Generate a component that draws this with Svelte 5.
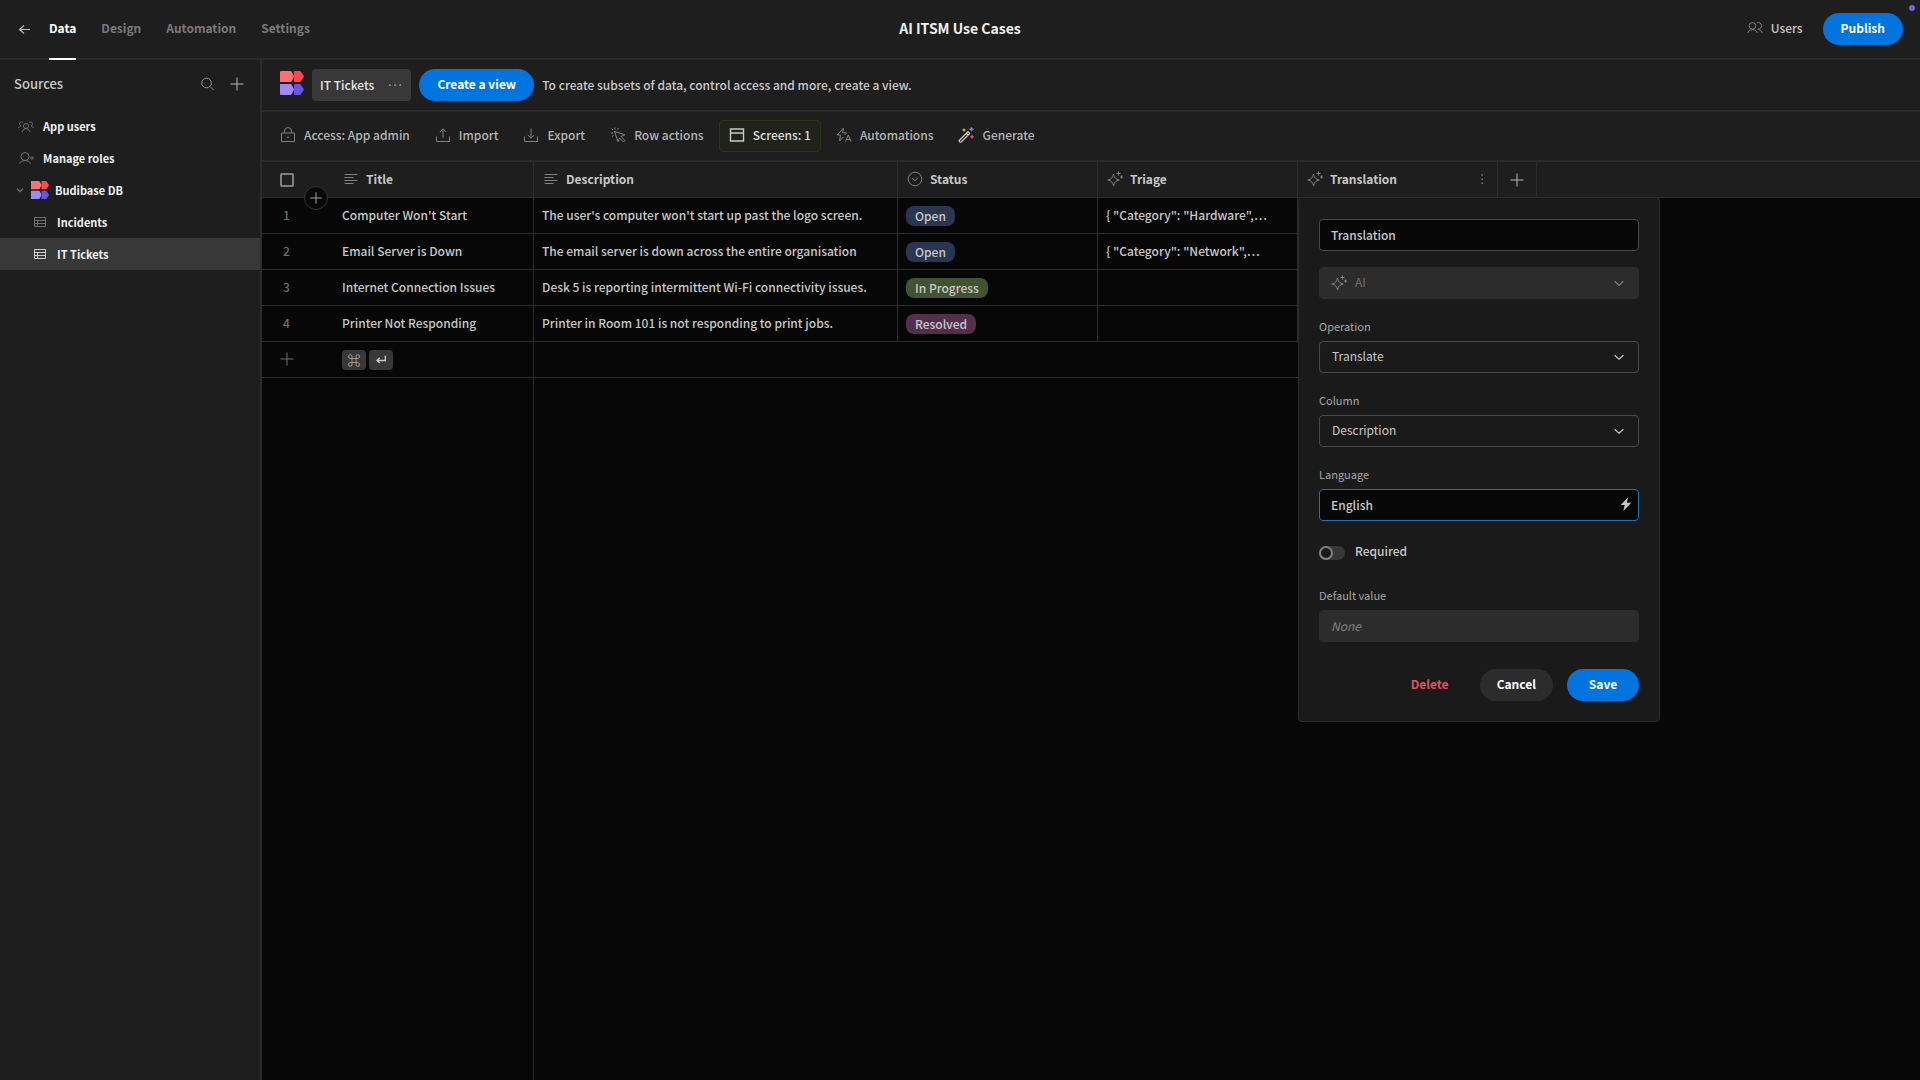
<script lang="ts">
	const tabs = ['Data', 'Design', 'Automation', 'Settings'];
	let activeTab = $state('Data');

	const sources = [
		{ name: 'App users', icon: 'group', level: 0 },
		{ name: 'Manage roles', icon: 'role', level: 0 },
		{ name: 'Budibase DB', icon: 'logo', level: 1 },
		{ name: 'Incidents', icon: 'table', level: 2 },
		{ name: 'IT Tickets', icon: 'table', level: 2 }
	];
	let activeSource = $state('IT Tickets');

	const actions = [
		{ name: 'Access: App admin', icon: 'lock' },
		{ name: 'Import', icon: 'import' },
		{ name: 'Export', icon: 'export' },
		{ name: 'Row actions', icon: 'click' },
		{ name: 'Screens: 1', icon: 'screen' },
		{ name: 'Automations', icon: 'automation' },
		{ name: 'Generate', icon: 'wand' }
	];

	const rows = [
		{
			title: "Computer Won't Start",
			description: "The user's computer won't start up past the logo screen.",
			status: 'Open',
			triage: '{ "Category": "Hardware",…'
		},
		{
			title: 'Email Server is Down',
			description: 'The email server is down across the entire organisation',
			status: 'Open',
			triage: '{ "Category": "Network",…'
		},
		{
			title: 'Internet Connection Issues',
			description: 'Desk 5 is reporting intermittent Wi-Fi connectivity issues.',
			status: 'In Progress',
			triage: ''
		},
		{
			title: 'Printer Not Responding',
			description: 'Printer in Room 101 is not responding to print jobs.',
			status: 'Resolved',
			triage: ''
		}
	];

	const statusClass: Record<string, string> = {
		Open: 'open',
		'In Progress': 'progress',
		Resolved: 'resolved'
	};

	let columnName = $state('Translation');
	let operation = $state('Translate');
	let column = $state('Description');
	let language = $state('English');
	let required = $state(false);
</script>

{#snippet logo(size: number)}
	<svg width={size} height={size} viewBox="0 0 24 24" aria-hidden="true">
		<path d="M0 .8Q0 0 .8 0H10.500q.8 0 1.200.7L14 5.500 11.700 10.300q-.4.7-1.200.7H0Z" fill="#ff6f73" />
		<path d="M14 .8Q14 0 14.800 0H19.500q.9 0 1.400.8L24 5.500 20.900 10.200q-.5.8-1.400.8H14.800q-.8 0-.8-.8Z" fill="#ff4750" />
		<path d="M0 13H10.500q.8 0 1.200.7L14 18.500 11.700 23.300q-.4.7-1.200.7H.8Q0 24 0 23.200Z" fill="#9f88f8" />
		<path d="M14 13.800Q14 13 14.800 13H19.500q.9 0 1.400.8L24 18.500 20.900 23.200q-.5.8-1.400.8H14.800q-.8 0-.8-.8Z" fill="#6a52e6" />
	</svg>
{/snippet}

{#snippet icon(name: string)}
	<svg class="icon" width="16" height="16" viewBox="0 0 16 16" aria-hidden="true">
		{#if name === 'back'}
			<path d="M14 8.500H3.500M8 4.500l-4.500 4 4.500 4" stroke-width="1.200" />
		{:else if name === 'search'}
			<circle cx="7.500" cy="7" r="4.800" /><path d="M11 10.500l3.500 3.500" />
		{:else if name === 'plus'}
			<path d="M8 1.500v13M1.500 8h13" />
		{:else if name === 'users'}
			<circle cx="5.500" cy="5.800" r="3.300" /><path d="M.5 13q1.500-3.500 5-3.500t5 3.500M10 2.800a3.300 3.300 0 1 1 .8 6.300q3 .4 4.700 3.900" />
		{:else if name === 'group'}
			<circle cx="8" cy="8" r="2.500" /><path d="M4 14q1-3.500 4-3.500t4 3.500M5 4.500a2 2 0 1 0-2 3.300Q1.500 8 .5 10M11 4.500a2 2 0 1 1 2 3.300q1.500.2 2.500 2.200" />
		{:else if name === 'role'}
			<circle cx="7" cy="6.500" r="4" /><path d="M1 13.500q2-3 6-3t6 3" /><circle cx="14" cy="8" r="1.200" />
		{:else if name === 'chevron'}
			<path d="M3 6l5 4.500L13 6" />
		{:else if name === 'table'}
			<path d="M2.500 3.500h11v9h-11zM2.500 6.500h11M2.500 9.500h11M5.500 6.500v6" />
		{:else if name === 'dots'}
			<path class="fill" d="M2 7.200h1.700v1.700H2zM7.200 7.200h1.700v1.700H7.200zM12.400 7.200h1.700v1.700h-1.700z" />
		{:else if name === 'more'}
			<path class="fill" d="M7.400 3.200h1.500v1.500H7.400zM7.400 7.400h1.500v1.500H7.400zM7.400 11.600h1.500v1.500H7.400z" />
		{:else if name === 'lock'}
			<path d="M1.500 6h13v8.500h-13zM4.500 6V4a3.500 3.500 0 0 1 7 0V6" /><circle class="fill" cx="8" cy="10.300" r=".9" />
		{:else if name === 'import'}
			<path d="M1.500 9.500v5h13v-5M8 11V2M4.800 5L8 1.800 11.200 5" />
		{:else if name === 'export'}
			<path d="M1.500 9.500v5h13v-5M8 1.500v9.500M4.800 8L8 11.200 11.200 8" />
		{:else if name === 'click'}
			<path d="M4.500 4.500l10.500 3.300-4 1.700 4 4-1.500 1.500-4-4-1.500 3.700ZM5 .5v2M1 6h2M1.500 1.500l1.700 1.700M8.500 1l-1 1.700M2 9.500l1.500-1" />
		{:else if name === 'screen'}
			<path d="M1.500 2h13v12h-13zM1.500 6h13" stroke-width="1.400" />
		{:else if name === 'automation'}
			<path d="M7.500 1L1.200 8h3.300L3.500 14l4-4M7.500 1L6.500 5.800h4L8.700 8M9.500 14.500l2.800-6.500 2.800 6.500M10.500 12.500h3.600" />
		{:else if name === 'wand'}
			<path d="M1.200 13.500L10 4.700l1.700 1.700L3 15.200Q1 15.500 1.200 13.500ZM8.500 6.300l1.700 1.700" stroke="#d0d0d0" stroke-width="1.200" />
			<path d="M13.500.300v4M11.500 2.300h4" stroke="#6e86e0" stroke-width="1.600" />
			<path d="M6 1.500v3M4.500 3h3" stroke="#d8b13c" stroke-width="1.400" />
			<path d="M14 8v3.500M12.300 9.800h3.400" stroke="#e0524f" stroke-width="1.500" />
		{:else if name === 'text'}
			<path d="M1.500 3.500h13M1.500 6.500h9M1.500 9.500h13M1.500 12.500h9" />
		{:else if name === 'options'}
			<circle cx="8" cy="8" r="6.800" /><path d="M4.800 6.700L8 9.700l3.200-3" />
		{:else if name === 'ai'}
			<path d="M6.500 3Q7.300 8.300 12.300 9 7.300 9.700 6.500 15 5.700 9.700.7 9 5.700 8.300 6.500 3ZM11.500.500v4M9.500 2.500h4M14.500 4.500v3M13 6h3" />
		{:else if name === 'bolt'}
			<path class="fill" d="M10.500 0L2 9h4.500L5 16l9-9.500H9Z" />
		{:else if name === 'return'}
			<path d="M13 3v5.500H4M6.500 5.500L3.500 8.500l3 3" stroke-width="1.600" />
		{/if}
	</svg>
{/snippet}

<div class="app">
	<header class="top-nav">
		<nav class="tabs">
			<button class="icon-btn" aria-label="Back">{@render icon('back')}</button>
			{#each tabs as tab}
				<button class="tab" class:active={tab === activeTab} onclick={() => (activeTab = tab)}>{tab}</button>
			{/each}
		</nav>
		<h1>AI ITSM Use Cases</h1>
		<div class="top-right">
			<button class="users">{@render icon('users')}Users</button>
			<button class="pill primary">Publish</button>
		</div>
		<span class="beacon"></span>
	</header>

	<div class="workspace">
		<aside class="sidebar">
			<div class="sidebar-header">
				<h2>Sources</h2>
				<button class="icon-btn" aria-label="Search">{@render icon('search')}</button>
				<button class="icon-btn light" aria-label="Add source">{@render icon('plus')}</button>
			</div>
			{#each sources as source}
				<button
					class="source level-{source.level}"
					class:selected={source.name === activeSource}
					onclick={() => (activeSource = source.name)}
				>
					{#if source.icon === 'logo'}
						<span class="caret">{@render icon('chevron')}</span>
						{@render logo(18)}
					{:else}
						{@render icon(source.icon)}
					{/if}
					<span>{source.name}</span>
				</button>
			{/each}
		</aside>

		<main class="content">
			<div class="view-bar">
				<span class="source-logo">{@render logo(24)}</span>
				<button class="view-tab">IT Tickets {@render icon('dots')}</button>
				<button class="pill primary">Create a view</button>
				<p>To create subsets of data, control access and more, create a view.</p>
			</div>

			<div class="toolbar">
				{#each actions as action}
					<button class="action" class:highlight={action.icon === 'screen'}>
						{@render icon(action.icon)}{action.name}
					</button>
				{/each}
			</div>

			<div class="grid">
				<table>
					<colgroup>
						<col class="col-gutter" />
						<col class="col-data" />
						<col class="col-description" />
						<col class="col-data" />
						<col class="col-data" />
						<col class="col-data" />
						<col class="col-add" />
						<col />
					</colgroup>
					<thead>
						<tr>
							<th class="gutter">
								<input type="checkbox" aria-label="Select all rows" />
								<button class="add-row" aria-label="Insert row">{@render icon('plus')}</button>
							</th>
							<th class="line"><div class="head">{@render icon('text')}Title</div></th>
							<th class="line"><div class="head">{@render icon('text')}Description</div></th>
							<th class="line"><div class="head">{@render icon('options')}Status</div></th>
							<th class="line"><div class="head">{@render icon('ai')}Triage</div></th>
							<th class="line">
								<div class="head">
									{@render icon('ai')}Translation
									<button class="icon-btn push" aria-label="Column options">{@render icon('more')}</button>
								</div>
								<form class="popover" onsubmit={(e) => e.preventDefault()}>
									<input class="field" type="text" aria-label="Column name" bind:value={columnName} />
									<div class="select disabled">
										<span class="leading">{@render icon('ai')}</span>
										<select class="field" aria-label="Column type" disabled>
											<option>AI</option>
										</select>
										<span class="trailing">{@render icon('chevron')}</span>
									</div>
									<div class="form-item">
										<label for="operation">Operation</label>
										<div class="select">
											<select class="field" id="operation" bind:value={operation}>
												<option>Translate</option>
											</select>
											<span class="trailing">{@render icon('chevron')}</span>
										</div>
									</div>
									<div class="form-item">
										<label for="column">Column</label>
										<div class="select">
											<select class="field" id="column" bind:value={column}>
												<option>Description</option>
												<option>Title</option>
											</select>
											<span class="trailing">{@render icon('chevron')}</span>
										</div>
									</div>
									<div class="form-item">
										<label for="language">Language</label>
										<div class="select">
											<input class="field focused" id="language" type="text" bind:value={language} />
											<span class="trailing bolt">{@render icon('bolt')}</span>
										</div>
									</div>
									<label class="toggle">
										<input type="checkbox" bind:checked={required} />
										<span>Required</span>
									</label>
									<div class="form-item">
										<label for="default-value">Default value</label>
										<input class="field" id="default-value" type="text" placeholder="None" disabled />
									</div>
									<div class="buttons">
										<button type="button" class="pill danger">Delete</button>
										<button type="button" class="pill secondary">Cancel</button>
										<button type="submit" class="pill primary">Save</button>
									</div>
								</form>
							</th>
							<th class="line center">
								<button class="icon-btn light" aria-label="Add column">{@render icon('plus')}</button>
							</th>
							<th></th>
						</tr>
					</thead>
					<tbody>
						{#each rows as row, i}
							<tr>
								<td class="gutter number">{i + 1}</td>
								<td class="line">{row.title}</td>
								<td class="line">{row.description}</td>
								<td class="line status"><span class="badge {statusClass[row.status]}">{row.status}</span></td>
								<td class="line">{row.triage}</td>
								<td class="line"></td>
								<td class="blank" colspan="2"></td>
							</tr>
						{/each}
						<tr>
							<td class="gutter">
								<button class="icon-btn dim" aria-label="Add row">{@render icon('plus')}</button>
							</td>
							<td class="line status">
								<div class="keys">
									<kbd>⌘</kbd>
									<kbd>{@render icon('return')}</kbd>
								</div>
							</td>
							<td colspan="4"></td>
							<td class="blank" colspan="2"></td>
						</tr>
						<tr class="rest">
							<td class="line blank" colspan="2"></td>
							<td class="blank" colspan="6"></td>
						</tr>
					</tbody>
				</table>
			</div>
		</main>
	</div>
</div>

<style>
	:global(body) {
		margin: 0;
		background: #070707;
	}

	.app {
		min-height: 100vh;
		display: flex;
		flex-direction: column;
		color: #c8c8c8;
		font-family: 'Noto Sans CJK SC', 'Source Sans Pro', sans-serif;
		font-size: 12px;
		line-height: 20px;
		font-weight: 500;
	}

	.app *,
	.app *::before {
		box-sizing: border-box;
	}

	button,
	input,
	select {
		font: inherit;
		color: inherit;
		margin: 0;
	}

	button {
		display: flex;
		align-items: center;
		padding: 0;
		border: none;
		background: none;
		white-space: nowrap;
		cursor: pointer;
	}

	h1,
	h2,
	p {
		margin: 0;
		font-size: inherit;
		font-weight: inherit;
	}

	svg {
		flex: none;
		display: block;
	}

	.icon {
		fill: none;
		stroke: currentColor;
		stroke-width: 1;
	}

	.icon .fill {
		fill: currentColor;
		stroke: none;
	}

	.icon-btn {
		color: #909090;
	}

	.icon-btn.light {
		color: #b8b8b8;
	}

	.icon-btn.dim {
		color: #707070;
	}

	.pill {
		justify-content: center;
		min-width: 72px;
		height: 32px;
		padding: 0 18px 2px;
		border-radius: 16px;
		font-weight: 700;
		color: #fff;
	}

	.pill.primary {
		background: #0074df;
	}

	.pill.secondary {
		background: #2c2c2c;
	}

	.pill.danger {
		color: #e0525e;
	}

	/* Top navigation */
	.top-nav {
		position: relative;
		display: grid;
		grid-template-columns: 1fr auto 1fr;
		align-items: center;
		height: 60px;
		padding-bottom: 2px;
		background: #1e1e1e;
		box-shadow: inset 0 -2px #2c2c2c;
	}

	.tabs {
		display: flex;
		align-items: center;
		gap: 25px;
		padding-left: 16px;
	}

	.tabs .icon-btn {
		margin-right: -8px;
		color: #b8b8b8;
	}

	.tab {
		height: 60px;
		margin-bottom: -2px;
		padding-bottom: 2px;
		border-bottom: 2px solid transparent;
		font-weight: 700;
		color: #7a7a7a;
	}

	.tab.active {
		border-bottom-color: #fff;
		color: #fff;
	}

	.top-nav h1 {
		padding-bottom: 2px;
		font-size: 14px;
		font-weight: 700;
		color: #f0f0f0;
	}

	.top-right {
		display: flex;
		justify-content: flex-end;
		align-items: center;
		gap: 20px;
		padding-right: 17px;
	}

	.users {
		gap: 8px;
		padding-bottom: 2px;
	}

	.users .icon {
		color: #808080;
	}

	.beacon {
		position: absolute;
		top: 5px;
		right: 5px;
		width: 6px;
		height: 6px;
		border-radius: 50%;
		background: #6b63dc;
	}

	/* Sources */
	.workspace {
		flex: 1;
		display: flex;
	}

	.sidebar {
		width: 262px;
		flex: none;
		border-right: 2px solid #2c2c2c;
		background: #1e1e1e;
	}

	.sidebar-header {
		display: flex;
		align-items: center;
		gap: 14px;
		height: 50px;
		padding: 0 15px 2px 14px;
	}

	.sidebar-header h2 {
		flex: 1;
		font-size: 13px;
	}

	.source {
		width: 100%;
		height: 32px;
		gap: 9px;
		padding-left: 18px;
		font-size: 11px;
		font-weight: 700;
		color: #f0f0f0;
	}

	.source .icon {
		color: #707070;
	}

	.source.level-1 {
		gap: 6px;
		padding-left: 15px;
	}

	.source.level-2 {
		padding-left: 32px;
	}

	.source.selected {
		background: #383838;
	}

	.source.selected .icon {
		color: #d0d0d0;
	}

	.caret .icon {
		width: 10px;
		height: 10px;
		stroke-width: 2;
	}

	/* Table toolbar */
	.content {
		flex: 1;
		min-width: 0;
		display: flex;
		flex-direction: column;
	}

	.view-bar {
		display: flex;
		align-items: center;
		gap: 8px;
		height: 52px;
		padding: 0 18px;
		border-bottom: 2px solid #2c2c2c;
		background: #1e1e1e;
	}

	.source-logo {
		padding-bottom: 4px;
	}

	.view-tab {
		height: 32px;
		gap: 13px;
		padding: 0 8px;
		border-radius: 4px;
		background: #383838;
		color: #e6e6e6;
	}

	.view-tab .icon {
		color: #909090;
	}

	.toolbar {
		display: flex;
		align-items: center;
		gap: 5px;
		height: 50px;
		padding: 0 8px;
		border-bottom: 2px solid #2c2c2c;
		background: #1e1e1e;
	}

	.action {
		height: 32px;
		gap: 8px;
		padding: 0 9px 2px;
		border: 1px solid transparent;
		border-radius: 4px;
		color: #b4b4b4;
	}

	.action .icon {
		color: #808080;
	}

	.action.highlight {
		border-color: #2c3518;
		background: #20231b;
		color: #dcdcdc;
	}

	.action.highlight .icon {
		color: #c8c8c8;
	}

	/* Grid */
	.grid {
		flex: 1;
		display: grid;
	}

	table {
		width: 100%;
		height: 100%;
		table-layout: fixed;
		border-spacing: 0;
	}

	.col-gutter {
		width: 72px;
	}

	.col-data {
		width: 200px;
	}

	.col-description {
		width: 364px;
	}

	.col-add {
		width: 39px;
	}

	th,
	td {
		height: 36px;
		padding: 0 8px 2px;
		border-bottom: 1px solid #2c2c2c;
		text-align: left;
		white-space: nowrap;
	}

	th {
		position: relative;
		padding: 0 7px 0 9px;
		background: #1e1e1e;
		font-weight: 700;
	}

	.line {
		border-right: 1px solid #2c2c2c;
	}

	.gutter {
		padding: 0 17px 2px;
	}

	th.gutter,
	.status {
		padding-bottom: 0;
	}

	.blank {
		border-bottom: none;
	}

	.rest td {
		height: auto;
	}

	.number {
		padding-left: 21px;
		color: #707070;
	}

	.head {
		display: flex;
		align-items: center;
		gap: 7px;
		padding-bottom: 2px;
	}

	.head .icon {
		color: #808080;
	}

	.push {
		margin-left: auto;
	}

	.center {
		padding: 0 11px;
	}

	.gutter input {
		appearance: none;
		display: block;
		width: 14px;
		height: 14px;
		margin-left: 1px;
		border: 2px solid #808080;
		border-radius: 2px;
	}

	.add-row {
		position: absolute;
		top: 24px;
		right: 6px;
		z-index: 1;
		justify-content: center;
		width: 24px;
		height: 24px;
		border: 1px solid #333;
		border-radius: 50%;
		background: #080808;
		color: #b8b8b8;
	}

	.add-row .icon {
		width: 14px;
		height: 14px;
	}

	.badge {
		display: block;
		width: fit-content;
		height: 20px;
		padding: 0 9px;
		border-radius: 8px;
	}

	.badge.open {
		background: #2a3651;
	}

	.badge.progress {
		background: #435230;
	}

	.badge.resolved {
		background: #532f4e;
	}

	.keys {
		display: flex;
		gap: 3px;
	}

	kbd {
		display: flex;
		align-items: center;
		justify-content: center;
		width: 24px;
		height: 20px;
		border-radius: 4px;
		background: #383838;
		font-family: inherit;
		font-size: 13px;
		font-weight: 700;
	}

	kbd .icon {
		width: 14px;
		height: 14px;
	}

	/* Column editor */
	.popover {
		position: absolute;
		top: 100%;
		left: 0;
		z-index: 2;
		display: flex;
		flex-direction: column;
		gap: 16px;
		width: 362px;
		padding: 21px 20px 20px;
		border: 1px solid #2c2c2c;
		border-radius: 4px;
		background: #1a1a1a;
		font-weight: 500;
	}

	.field {
		appearance: none;
		display: block;
		width: 100%;
		height: 32px;
		padding: 0 11px 2px;
		border: 1px solid #4a4a4a;
		border-radius: 4px;
		background: #070707;
		outline: none;
	}

	select.field {
		padding: 0 12px 2px;
		background: #1a1a1a;
		font-weight: 400;
	}

	.field.focused {
		border-color: #1d72b8;
	}

	.field:disabled {
		border-color: #2c2c2c;
		background: #2c2c2c;
		color: #707070;
		opacity: 1;
	}

	.field::placeholder {
		font-style: italic;
		font-weight: 400;
		color: #808080;
	}

	.select {
		position: relative;
	}

	.leading,
	.trailing {
		position: absolute;
		top: 8px;
		pointer-events: none;
	}

	.leading {
		left: 12px;
	}

	.trailing {
		top: 9px;
		right: 13px;
	}

	.trailing .icon {
		width: 14px;
		height: 14px;
		stroke-width: 1.4;
	}

	.trailing.bolt {
		top: 8px;
		right: 6px;
	}

	.select.disabled {
		color: #808080;
	}

	.select.disabled .field {
		padding-left: 35px;
	}

	.form-item label {
		display: block;
		padding: 1px 0 5px;
		font-size: 11px;
		font-weight: 400;
		color: #a8a8a8;
	}

	.toggle {
		display: flex;
		align-items: center;
		gap: 10px;
		height: 31px;
	}

	.toggle span {
		padding-bottom: 4px;
	}

	.toggle input {
		appearance: none;
		width: 26px;
		height: 14px;
		border-radius: 7px;
		background: #383838;
	}

	.toggle input::before {
		content: '';
		display: block;
		width: 14px;
		height: 14px;
		border: 2px solid #808080;
		border-radius: 50%;
		background: #1a1a1a;
	}

	.toggle input:checked::before {
		margin-left: 12px;
	}

	.buttons {
		display: flex;
		justify-content: flex-end;
		gap: 14px;
		padding-top: 11px;
	}

	.buttons .pill {
		padding: 0 17px 2px;
	}
</style>
